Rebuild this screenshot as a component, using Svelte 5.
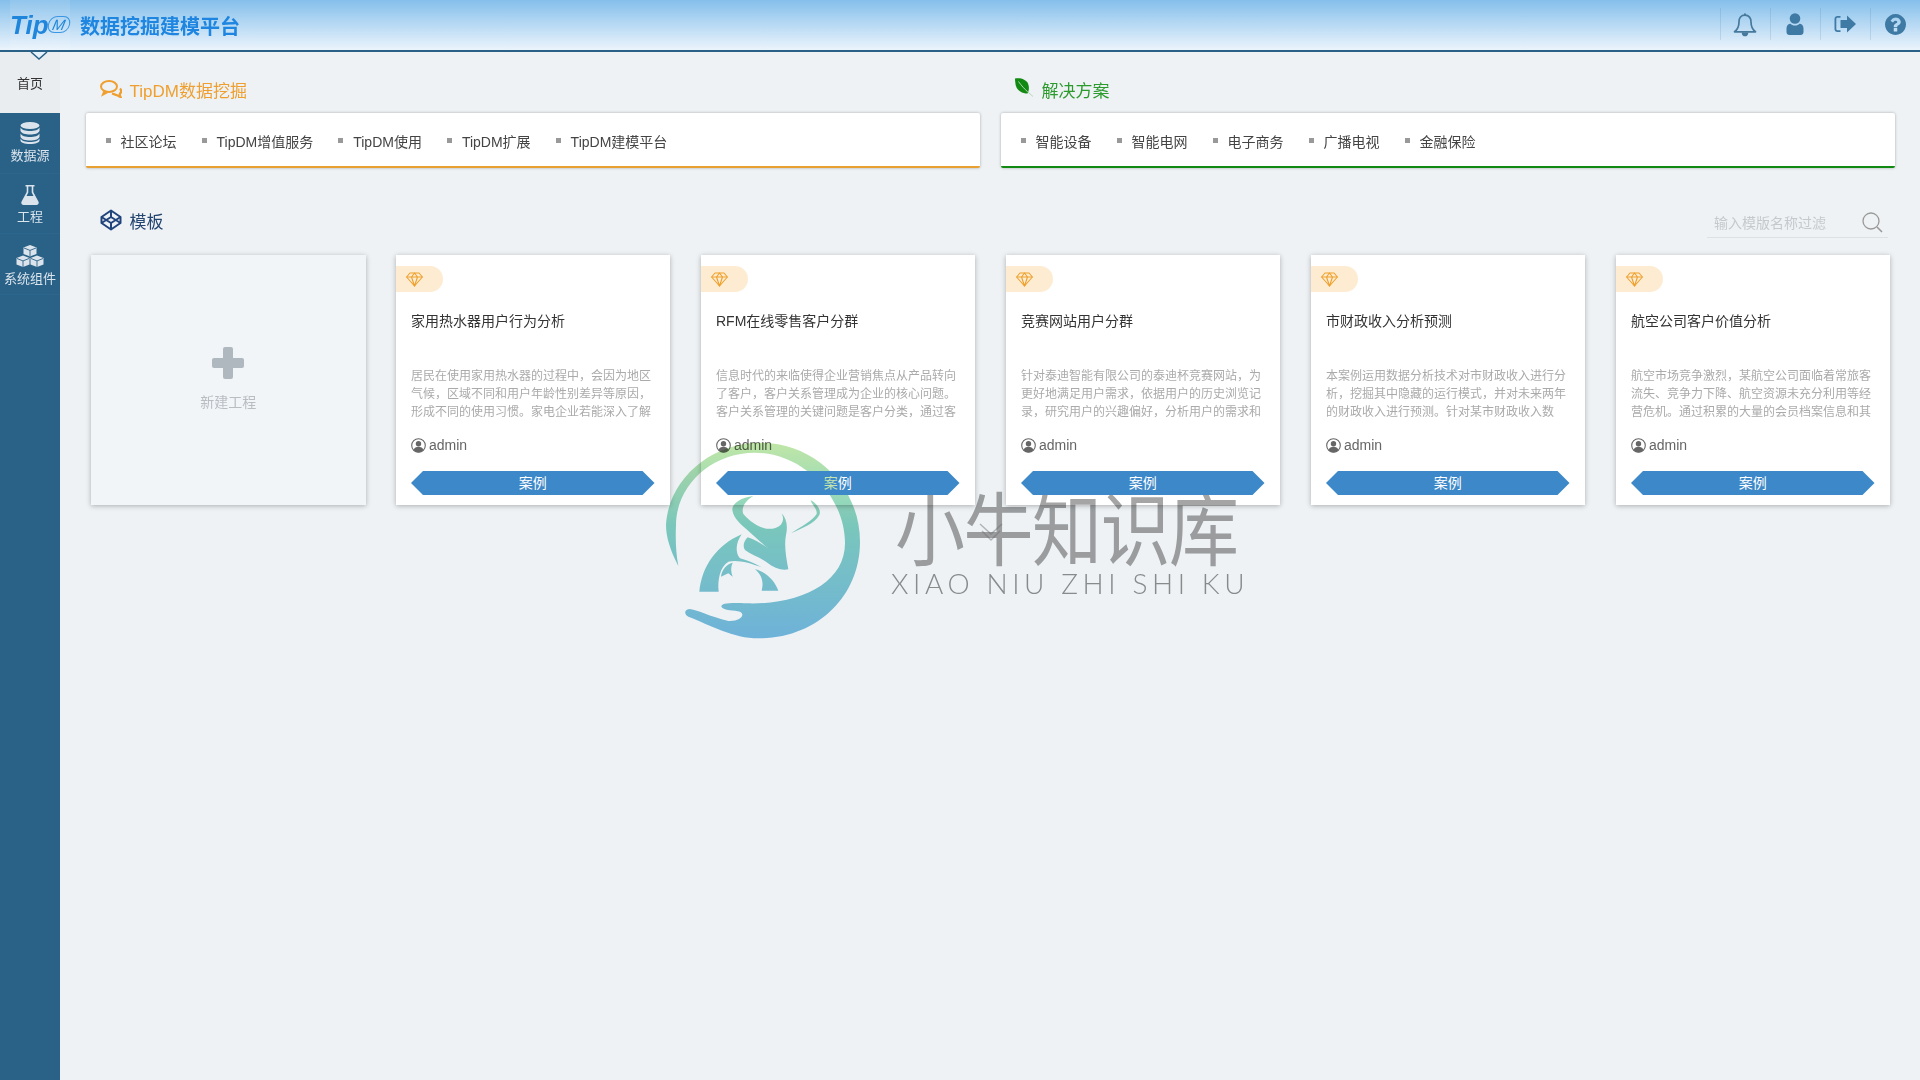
<script>
  const nav1 = ['社区论坛', 'TipDM增值服务', 'TipDM使用', 'TipDM扩展', 'TipDM建模平台'];
  const nav2 = ['智能设备', '智能电网', '电子商务', '广播电视', '金融保险'];
  const cards = [
    { t: '家用热水器用户行为分析', d: '居民在使用家用热水器的过程中，会因为地区气候，区域不同和用户年龄性别差异等原因，形成不同的使用习惯。家电企业若能深入了解' },
    { t: 'RFM在线零售客户分群', d: '信息时代的来临使得企业营销焦点从产品转向了客户，客户关系管理成为企业的核心问题。客户关系管理的关键问题是客户分类，通过客', tint: true },
    { t: '竞赛网站用户分群', d: '针对泰迪智能有限公司的泰迪杯竞赛网站，为更好地满足用户需求，依据用户的历史浏览记录，研究用户的兴趣偏好，分析用户的需求和' },
    { t: '市财政收入分析预测', d: '本案例运用数据分析技术对市财政收入进行分析，挖掘其中隐藏的运行模式，并对未来两年的财政收入进行预测。针对某市财政收入数' },
    { t: '航空公司客户价值分析', d: '航空市场竞争激烈，某航空公司面临着常旅客流失、竞争力下降、航空资源未充分利用等经营危机。通过积累的大量的会员档案信息和其' }
  ];
</script>

<div class="page">
  <header class="top">
    <div class="logo"><span class="tip">Tip</span><span class="dm">M</span></div>
    <div class="brand">数据挖掘建模平台</div>
    <div class="tools">
      <div class="tool">
        <svg width="24" height="25" viewBox="0 0 24 25" fill="none" stroke="#47799c" stroke-width="1.7" stroke-linejoin="round"><path d="M12 3.2c-4 0-6 3-6 6.6 0 5-1.5 8-4.5 10h21c-3-2-4.500-5-4.500-10 0-3.600-2-6.600-6-6.600z"/><circle cx="12" cy="2.300" r="1.100" fill="#47799c" stroke="none"/><path d="M9.500 20.500c.3 2 1.300 3 2.500 3s2.200-1 2.500-3" fill="#47799c"/></svg>
      </div>
      <div class="tool">
        <svg width="18" height="22" viewBox="0 0 18 22" fill="#3f7aa5"><circle cx="9" cy="5.500" r="5.300"/><path d="M0.500 19c0 2 1.300 3 3 3h11c1.700 0 3-1 3-3v-3.500c0-3-1.800-4.800-4-4.800-1 1-2.500 1.800-4.500 1.800s-3.500-.8-4.500-1.800c-2.200 0-4 1.800-4 4.800z"/></svg>
      </div>
      <div class="tool">
        <svg width="22" height="18" viewBox="0 0 22 18" fill="#3f7aa5"><path d="M6.500 1H3.500C1.800 1 .5 2.300.5 4v10c0 1.700 1.300 3 3 3h3v-1.800h-3c-.7 0-1.200-.5-1.200-1.200V4c0-.7.5-1.200 1.200-1.200h3z"/><path d="M13 0.500 22 9l-9 8.500V13H6.500V5H13z"/></svg>
      </div>
      <div class="tool">
        <svg width="21" height="21" viewBox="128 128 1536 1536" fill="#3f7aa5"><path d="M1024 1376v-192q0-14-9-23t-23-9h-192q-14 0-23 9t-9 23v192q0 14 9 23t23 9h192q14 0 23-9t9-23zm256-672q0-88-55.500-163t-138.500-116-170-41q-243 0-371 213-15 24 8 42l132 100q7 6 19 6 16 0 25-12 53-68 86-92 34-24 86-24 48 0 85.500 26t37.500 59q0 38-20 61t-68 45q-63 28-115.500 86.500t-52.500 125.500v36q0 14 9 23t23 9h192q14 0 23-9t9-23q0-19 21.500-49.500t54.500-49.500q32-18 49-28.500t46-35 44.500-48 28-60.500 12.500-81zm384 192q0 209-103 385.500t-279.500 279.500-385.500 103-385.500-103-279.500-279.500-103-385.500 103-385.500 279.500-279.500 385.500-103 385.500 103 279.500 279.500 103 385.500z"/></svg>
      </div>
    </div>
  </header>

  <svg class="caret" width="18" height="8" viewBox="0 0 18 8"><path d="M1 0l8 7 8-7" fill="#e6f2fb" stroke="#2a6187" stroke-width="1.500"/></svg>

  <div class="body">
    <aside class="side">
      <div class="home">首页</div>
      <div class="item">
        <svg width="20" height="22" viewBox="0 0 20 22" fill="#dbe4ec"><ellipse cx="10" cy="3.500" rx="9.500" ry="3.500"/><path d="M.5 5.500c1 2.500 5 3.500 9.500 3.500s8.500-1 9.500-3.500V9c-1 2.500-5 3.500-9.500 3.500S1.500 11.500.5 9z"/><path d="M.5 11.500C1.500 14 5.500 15 10 15s8.500-1 9.500-3.500V15c-1 2.500-5 3.500-9.500 3.500S1.500 17.500.5 15z" /><path d="M.5 16.500c1 2.500 5 3.500 9.500 3.500s8.500-1 9.500-3.500v2c0 2-4 3.500-9.500 3.500S.5 20.500.5 18.500z"/></svg>
        <span>数据源</span>
      </div>
      <div class="item flask">
        <svg width="18" height="20" viewBox="0 0 18 20" fill="#dbe4ec"><path d="M4.500 0h9v1.600h-1.200v5.400l5.200 9.800c.7 1.500-.2 3.200-2 3.200H2.500c-1.800 0-2.700-1.700-2-3.200L5.700 7V1.600H4.500z"/><path d="M7.300 1.600v5.800L5.500 11h7l-1.800-3.600V1.600z" fill="#2a6187"/></svg>
        <span>工程</span>
      </div>
      <div class="item cubes">
        <svg width="28" height="22" viewBox="0 0 28 22" fill="#dbe4ec"><path d="M14 0l6.500 2.600v6.300L14 11.500 7.500 8.900V2.600z"/><path d="M7 10.500l6.500 2.600v6.300L7 22 .5 19.400v-6.300z"/><path d="M21 10.500l6.500 2.600v6.300L21 22l-6.500-2.600v-6.300z"/><path d="M8 3l6 2.400L20 3M14 5.400v6M1 13.500l6 2.400 6-2.400M7 16v6M15 13.500l6 2.400 6-2.400M21 16v6" fill="none" stroke="#2a6187" stroke-width=".9"/></svg>
        <span>系统组件</span>
      </div>
    </aside>

    <main class="main">
      <section class="links">
        <div class="col">
          <h2 class="head orange">
            <svg width="22" height="18" viewBox="0 0 22 18" fill="none" stroke="#ef9f2f" stroke-width="2"><ellipse cx="9" cy="6.500" rx="8" ry="5.500"/><path d="M4.500 11 3 14.500l4.500-2.300"/><path d="M12 13.500c3 1 5.500 1.500 8.500 3.500-.7-1.500-.8-2.500-.5-3.500 1.500-1 1.500-3.500 0-5" stroke-width="2.300"/></svg>
            <span>TipDM数据挖掘</span>
          </h2>
          <ul class="bar b-orange">
            {#each nav1 as n}<li>{n}</li>{/each}
          </ul>
        </div>
        <div class="col">
          <h2 class="head green">
            <svg class="leaf" width="20" height="21" viewBox="0 0 20 20"><path d="M1 1c6-1 11 1 13 5 1.500 3.500 1 7.500-.5 10C8 16 3 13 1.800 8 1.300 5.500 1 3 1 1z" fill="#128a12"/><path d="M4.500 4c2.500 3.500 6 8 14.500 15" fill="none" stroke="#b7d8b7" stroke-width="1"/></svg>
            <span>解决方案</span>
          </h2>
          <ul class="bar b-green">
            {#each nav2 as n}<li>{n}</li>{/each}
          </ul>
        </div>
      </section>

      <div class="tpl">
        <h2 class="head navy">
          <svg width="22" height="22" viewBox="0 0 22 22" fill="none" stroke="#21437c" stroke-width="2" stroke-linejoin="round"><path d="M11 1.500 20.500 8v6L11 20.500 1.500 14V8z"/><path d="M11 1.500V8M11 14v6.500M1.500 8 11 14l9.500-6M1.500 14 11 8l9.500 6"/></svg>
          <span>模板</span>
        </h2>
        <div class="search">
          <span class="ph">输入模版名称过滤</span>
          <svg width="22" height="22" viewBox="0 0 22 22" fill="none" stroke="#999" stroke-width="1.300"><circle cx="10" cy="10" r="8"/><path d="M16 16l5 5" stroke-width="1.600"/></svg>
        </div>
      </div>

      <div class="grid">
        <div class="card new">
          <svg width="32" height="32" viewBox="0 0 32 32" fill="#b0b8bf"><rect x="11" y="0" width="10" height="32" rx="2"/><rect x="0" y="11" width="32" height="10" rx="2"/></svg>
          <span>新建工程</span>
        </div>
        {#each cards as c}
          <article class="card">
            <div class="pill">
              <svg width="17" height="15" viewBox="0 0 17 15" fill="none" stroke="#eda02c" stroke-width="1.100" stroke-linejoin="round"><path d="M4 1h9l3.400 4L8.500 14 .6 5z"/><path d="M.6 5h15.800M5.500 5 8.500 14l3-9M5.500 5l3-4 3 4"/></svg>
            </div>
            <h3>{c.t}</h3>
            <p>{c.d}</p>
            <div class="user">
              <svg width="15" height="15" viewBox="0 0 15 15"><circle cx="7.500" cy="7.500" r="6.800" fill="none" stroke="#666" stroke-width="1.100"/><circle cx="7.500" cy="5.800" r="2.700" fill="#666"/><path d="M2.500 12c.8-2.300 2.700-3.300 5-3.300s4.200 1 5 3.300c-1.300 1.500-3 2.300-5 2.300s-3.700-.8-5-2.300z" fill="#666"/></svg>
              <span>admin</span>
            </div>
            <div class="btn">{#if c.tint}<span class="tint">案</span>例{:else}案例{/if}</div>
          </article>
        {/each}
      </div>
    </main>
  </div>

  <div class="mark">
    <svg class="bull" width="210" height="210" viewBox="0 0 630 630">
      <defs>
        <linearGradient id="wm" gradientUnits="userSpaceOnUse" x1="0" y1="8" x2="0" y2="595">
          <stop offset="0" stop-color="#c0e6a6"/>
          <stop offset=".42" stop-color="#83d2c3"/>
          <stop offset="1" stop-color="#76bce2"/>
        </linearGradient>
      </defs>
      <g fill="url(#wm)">
        <path d="M55 378C30 330 18 290 18 255C25 120 150 8 300 8C470 8 600 145 600 305C600 470 470 595 295 595C220 595 150 555 85 530C72 522 72 510 88 507C110 508 150 530 205 543C240 545 258 525 240 515C225 510 190 512 184 500C184 490 205 488 260 490C420 495 555 430 555 310C555 170 430 38 285 38C150 38 48 140 48 255C46 300 48 340 55 378Z"/>
        <path d="M280 168C245 172 215 190 217 210C220 235 245 255 262 270C285 290 305 310 325 325C305 312 285 298 263 292C250 305 248 320 255 330C275 345 300 352 320 367C342 385 365 392 385 388C378 350 372 315 378 285C384 260 380 235 365 220C370 232 372 242 362 255C350 265 335 268 320 266C295 262 270 245 250 222C243 205 255 182 280 168Z"/>
        <path d="M118 455C125 380 170 315 245 283C226 310 226 340 240 355C262 362 285 370 305 382C270 368 230 358 205 365C180 380 172 420 176 455Z"/>
        <path d="M285 388C320 395 345 425 355 452H305C312 425 305 405 285 388Z"/>
        <path d="M218 368C200 372 185 390 183 410L205 400L218 410C212 395 212 380 218 368Z"/>
        <path d="M452 180C470 190 485 210 478 225C465 250 425 265 393 280C420 262 460 240 470 222C472 205 455 195 452 180Z"/>
      </g>
    </svg>
    <svg class="chev" width="26" height="24" viewBox="0 0 26 24" fill="none" stroke="#8a8a8a" stroke-opacity=".55" stroke-width="1.500"><path d="M2 2l11 10 11-10M4 9l9 9 9-9"/></svg>
    <div class="mk-cn">小牛知识库</div>
    <div class="mk-en">XIAO NIU ZHI SHI KU</div>
  </div>
</div>

<style>
  :global(body) { margin: 0; background: #eef2f5; }
  .page {
    position: relative;
    height: 1080px;
    overflow: hidden;
    display: flex;
    flex-direction: column;
    font-family: "Liberation Sans", "Noto Sans CJK SC", sans-serif;
    background: #eef2f5;
    color: #333;
  }
  .top {
    height: 50px;
    flex: none;
    display: flex;
    align-items: center;
    background: linear-gradient(#85bfeb, #ebf4fc);
    border-bottom: 2px solid #2a6187;
  }
  .logo {
    display: flex;
    align-items: flex-start;
    height: 50px;
    margin-left: 10px;
    width: 60px;
    padding-top: 10px;
    box-sizing: border-box;
    background: rgba(255, 255, 255, .1);
  }
  .tip {
    font-size: 26px;
    font-weight: 700;
    font-style: italic;
    color: #1f86db;
    line-height: 30px;
  }
  .dm {
    margin: 6px 0 0 -1px;
    width: 20px;
    height: 15px;
    border: 1.500px solid #3a97e3;
    border-radius: 8px;
    transform: skewX(-12deg);
    font-size: 15px;
    line-height: 15px;
    text-align: center;
    font-style: italic;
    color: #1f86db;
  }
  .brand {
    margin-left: 10px;
    font-size: 20px;
    font-weight: 700;
    color: #1e86e0;
  }
  .tools { margin-left: auto; display: flex; }
  .tool {
    width: 50px;
    height: 32px;
    box-sizing: border-box;
    margin-top: -2px;
    padding-right: 1px;
    border-left: 1px solid rgba(70, 120, 160, .18);
    display: flex;
    align-items: center;
    justify-content: center;
  }
  .caret { position: absolute; left: 30px; top: 52px; z-index: 2; }
  .body { flex: 1; display: flex; min-height: 0; }
  .side { width: 60px; flex: none; background: #2a6187; }
  .home {
    height: 61px;
    box-sizing: border-box;
    padding-top: 23px;
    background: #e9edf0;
    color: #333;
    font-size: 13px;
    line-height: 18px;
    text-align: center;
  }
  .item {
    height: 60.500px;
    box-sizing: border-box;
    padding-top: 9px;
    display: flex;
    flex-direction: column;
    align-items: center;
    gap: 3px;
    border-bottom: 1px solid #2d668d;
    color: #dbe5ed;
    font-size: 13px;
    line-height: 18px;
  }
  .flask { padding-top: 11px; }
  .cubes { padding-top: 11px; }
  .main { flex: 1; min-width: 0; padding: 0 25.500px; }
  .links { display: flex; gap: 21px; }
  .col { flex: 1; min-width: 0; }
  .head {
    margin: 0;
    height: 61px;
    padding: 13px 0 0 14px;
    box-sizing: border-box;
    display: flex;
    align-items: center;
    gap: 8px;
    font-size: 17px;
    font-weight: 400;
  }
  .orange { color: #ef9f2f; }
  .green { color: #2c9a2c; }
  .navy { color: #24456f; height: auto; padding-top: 0; padding-bottom: 4px; }
  .leaf { margin: -3px 0 0 -1px; }
  .bar {
    list-style: none;
    margin: 0;
    padding: 2px 0 0 20px;
    height: 55px;
    box-sizing: border-box;
    display: flex;
    align-items: center;
    gap: 25px;
    background: #fff;
    border-bottom: 2px solid;
    border-radius: 2px;
    box-shadow: 0 0 3px rgba(0, 0, 0, .3);
    font-size: 14px;
    color: #444;
  }
  .b-orange { border-color: #e8a030; }
  .b-green { border-color: #128a12; }
  .bar li {
    display: flex;
    align-items: center;
    gap: 10px;
  }
  .bar li::before {
    content: "";
    width: 5px;
    height: 5px;
    background: #999;
  }
  .tpl {
    display: flex;
    justify-content: space-between;
    align-items: flex-end;
    margin-top: 38px;
    height: 32px;
    padding-right: 6.500px;
  }
  .tpl .head { align-self: center; }
  .search {
    width: 181px;
    height: 32px;
    box-sizing: border-box;
    padding: 0 5px 0 7px;
    display: flex;
    align-items: center;
    justify-content: space-between;
    border-bottom: 1px solid #dde1e4;
  }
  .ph { font-size: 14px; color: #c6c9cc; }
  .grid {
    display: grid;
    grid-template-columns: 274px repeat(5, 273.500px);
    gap: 31.500px;
    margin: 17px 0 0 5px;
  }
  .card {
    height: 250px;
    background: #fff;
    box-shadow: 0 1px 5px rgba(0, 0, 0, .28);
    display: flex;
    flex-direction: column;
    padding: 11px 15px 10px;
    box-sizing: border-box;
  }
  .new {
    margin-right: -1.500px;
    background: #f1f5f8;
    align-items: center;
    padding-top: 92px;
    gap: 12px;
    font-size: 14px;
    color: #b9bdc1;
  }
  .pill {
    width: 47px;
    height: 26px;
    margin-left: -15px;
    background: #feecd2;
    border-radius: 0 13px 13px 0;
    display: flex;
    align-items: center;
    padding-left: 10px;
    box-sizing: border-box;
  }
  h3 {
    margin: 19px 0 0;
    font-size: 14px;
    line-height: 20px;
    font-weight: 400;
    color: #333;
  }
  p {
    margin: 36px 0 0;
    height: 54px;
    font-size: 12px;
    line-height: 18px;
    color: #aaa;
  }
  .user {
    margin-top: 14px;
    height: 20px;
    display: flex;
    align-items: center;
    gap: 3px;
    font-size: 14px;
    color: #666;
  }
  .btn {
    position: relative;
    z-index: 6;
    margin-top: 16px;
    height: 24px;
    line-height: 24px;
    text-align: center;
    font-size: 14px;
    color: #fff;
    background: #3d88c8;
    clip-path: polygon(12px 0, calc(100% - 12px) 0, 100% 50%, calc(100% - 12px) 100%, 12px 100%, 0 50%);
  }
  .tint { color: #c4e4ae; }
  .mark {
    position: absolute;
    left: 650px;
    top: 420px;
    width: 620px;
    height: 240px;
    pointer-events: none;
    z-index: 5;
    mix-blend-mode: multiply;
  }
  .bull { position: absolute; left: 10px; top: 20px; }
  .chev { position: absolute; left: 328px; top: 102px; }
  .mk-cn {
    position: absolute;
    left: 245px;
    top: 60px;
    width: 350px;
    font-family: "Noto Sans CJK SC", sans-serif;
    font-size: 70px;
    line-height: 90px;
    letter-spacing: -1.500px;
    color: rgba(110, 110, 110, .62);
    transform: scaleY(1.14);
    white-space: nowrap;
  }
  .mk-en {
    position: absolute;
    left: 241px;
    top: 145.500px;
    font-family: Lato, sans-serif;
    font-weight: 300;
    font-size: 28px;
    line-height: 34px;
    letter-spacing: 4.600px;
    color: rgba(110, 110, 110, .75);
    white-space: nowrap;
  }
</style>
